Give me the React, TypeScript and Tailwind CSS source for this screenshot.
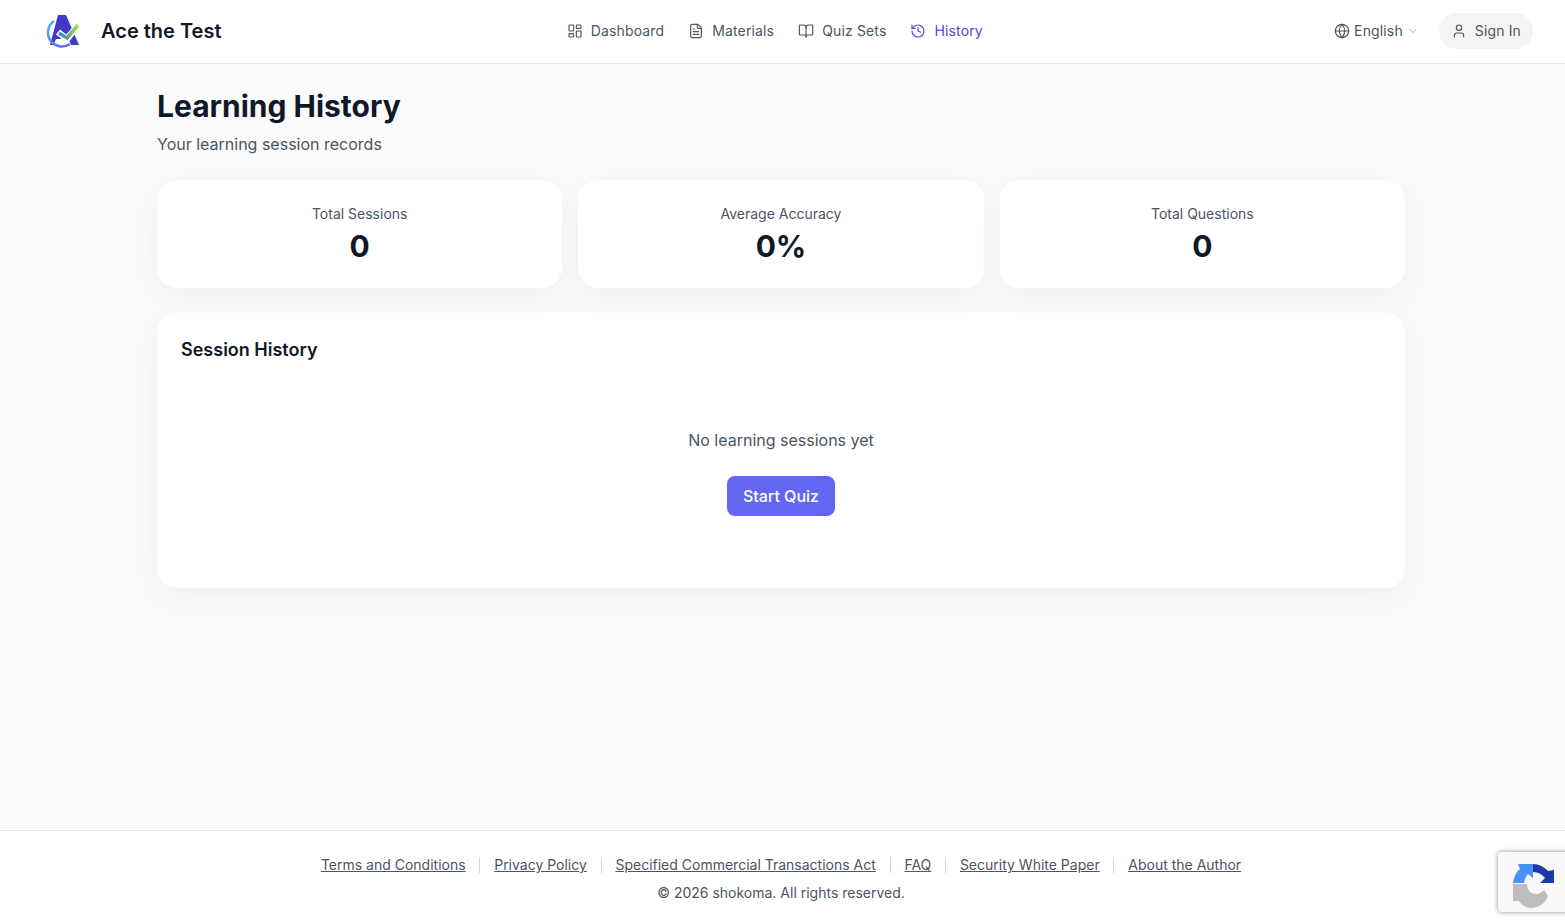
import { BookOpen, ChevronDown, FileText, Globe, History, LayoutDashboard, User } from 'lucide-react';

const navItems = [
  { label: 'Dashboard', icon: LayoutDashboard, active: false },
  { label: 'Materials', icon: FileText, active: false },
  { label: 'Quiz Sets', icon: BookOpen, active: false },
  { label: 'History', icon: History, active: true },
];

const stats = [
  { label: 'Total Sessions', value: '0' },
  { label: 'Average Accuracy', value: '0%' },
  { label: 'Total Questions', value: '0' },
];

const footerLinks = [
  'Terms and Conditions',
  'Privacy Policy',
  'Specified Commercial Transactions Act',
  'FAQ',
  'Security White Paper',
  'About the Author',
];

function Logo() {
  return (
    <svg width="40" height="40" viewBox="0 0 40 40" fill="none">
      <defs>
        <linearGradient id="ring" x1="6" y1="8" x2="24" y2="36" gradientUnits="userSpaceOnUse">
          <stop offset="0" stopColor="#38bdf8" />
          <stop offset="1" stopColor="#6366f1" />
        </linearGradient>
        <linearGradient id="check" x1="16" y1="26" x2="35" y2="14" gradientUnits="userSpaceOnUse">
          <stop offset="0" stopColor="#3b82c4" />
          <stop offset="1" stopColor="#a3e635" />
        </linearGradient>
      </defs>
      <path d="M15 4h8l13 30h-8l-2.5-6H13l-2.5 6H7z" fill="#4338ca" />
      <path d="M11 10A13.5 13.5 0 0 0 27 33" stroke="url(#ring)" strokeWidth="2.5" />
      <path d="M15 21l9 7 12-15" stroke="#fff" strokeWidth="6.5" />
      <path d="M16 22l8 5 11-13" stroke="url(#check)" strokeWidth="3.5" />
    </svg>
  );
}

function RecaptchaMark() {
  return (
    <svg width="42" height="46" viewBox="0 0 42 46" fill="none">
      <path d="M1 20C2 14 4 9 8 6L6 1H21V15L16 11C14 13 13 16 12 20Z" fill="#4a90f5" />
      <path d="M21 1C27 1 32 4 36 8L42 7V20H28L33 15C30 11 26 9 21 9Z" fill="#1c3aa9" />
      <path d="M1 21H15C15 26 18 31 24 31C27 31 30 29 32 27L36 33C33 41 26 45 19 45C14 45 10 42 7 38L1 38Z" fill="#bdbdbd" />
    </svg>
  );
}

export default function App() {
  return (
    <div className="min-h-[920px] flex flex-col bg-[#fafbfd] font-['Inter',sans-serif] text-[#111827]">
      {/* HEADER */}
      <header className="h-16 shrink-0 flex items-center justify-between bg-white border-b border-[#e5e7eb] pl-[43px] pr-8 pb-px">
        <div className="flex items-center gap-[18px]">
          <Logo />
          <span className="text-xl font-semibold">Ace the Test</span>
        </div>

        <nav className="flex items-center gap-6 mr-[6px] text-sm tracking-[0.01em]">
          {navItems.map((item) => (
            <a
              key={item.label}
              className={`flex items-center gap-2 ${item.active ? 'text-[#4f46e5]' : 'text-[#4b5563]'}`}
            >
              <item.icon size={16} strokeWidth={1.75} />
              {item.label}
            </a>
          ))}
        </nav>

        <div className="flex items-center gap-5 text-sm tracking-[0.01em] text-[#4b5563]">
          <div className="flex items-center gap-1">
            <Globe size={16} strokeWidth={1.75} />
            English
            <ChevronDown size={12} className="text-[#9ca3af]" />
          </div>
          <button className="h-9 flex items-center gap-2 px-3 rounded-full bg-[#f3f4f6]">
            <User size={16} strokeWidth={1.75} />
            Sign In
          </button>
        </div>
      </header>

      {/* MAIN */}
      <main className="flex-1 pr-[3px]">
        <div className="max-w-[1248px] mx-auto pt-6">
          <h1 className="text-3xl font-bold leading-9">Learning History</h1>
          <p className="mt-2 text-[#4b5563]">Your learning session records</p>

          <div className="mt-6 grid grid-cols-3 gap-4">
            {stats.map((stat) => (
              <div key={stat.label} className="h-[108px] bg-white rounded-[20px] shadow-[0_10px_30px_rgba(0,0,0,0.05)] p-6 text-center">
                <p className="text-sm leading-5 text-[#4b5563]">{stat.label}</p>
                <p className="mt-1 text-3xl font-bold leading-9">{stat.value}</p>
              </div>
            ))}
          </div>

          <section className="mt-6 h-[276px] bg-white rounded-[20px] shadow-[0_10px_30px_rgba(0,0,0,0.05)] p-6">
            <h2 className="text-lg font-semibold leading-7">Session History</h2>
            <div className="mt-16 flex flex-col items-center">
              <p className="text-[#4b5563]">No learning sessions yet</p>
              <button className="mt-6 h-10 px-4 rounded-lg bg-[#6366f1] text-white font-medium">Start Quiz</button>
            </div>
          </section>
        </div>
      </main>

      {/* FOOTER */}
      <footer className="h-[90px] shrink-0 bg-white border-t border-[#e5e7eb] pt-6 pr-[3px] text-sm text-[#4b5563]">
        <div className="flex items-center justify-center">
          {footerLinks.map((link, i) => (
            <div key={link} className="flex items-center">
              {i > 0 && <span className="mx-[13.8px] h-4 w-px bg-[#d1d5db]" />}
              <a className="underline leading-5">{link}</a>
            </div>
          ))}
        </div>
        <p className="mt-2 text-center leading-5">© 2026 shokoma. All rights reserved.</p>
      </footer>

      {/* reCAPTCHA badge */}
      <div className="fixed left-[1498px] top-[852px] w-[256px] h-[60px] bg-[#f9f9f9] shadow-[0_0_5px_rgba(128,128,128,0.9)] rounded-sm flex items-start pt-[11px] pl-[14px]">
        <RecaptchaMark />
      </div>
    </div>
  );
}
